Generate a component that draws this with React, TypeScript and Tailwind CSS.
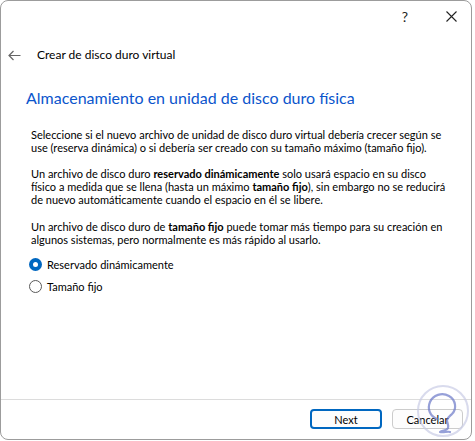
import React from 'react';

const font = { fontFamily: 'Lato, "Noto Sans", sans-serif' };

const Radio: React.FC<{ checked?: boolean; label: string }> = ({ checked, label }) => (
  <label className="flex items-center h-[22px] gap-[5px]">
    {checked ? (
      <span className="w-[13px] h-[13px] rounded-full bg-[#0067c0] flex items-center justify-center">
        <span className="w-[5px] h-[5px] rounded-full bg-white" />
      </span>
    ) : (
      <span className="w-[13px] h-[13px] rounded-full border border-[#5a5a5a] bg-white" />
    )}
    <span>{label}</span>
  </label>
);

const Watermark = () => (
  <svg className="absolute left-[415px] top-[383px] opacity-70" width="56" height="56" viewBox="0 0 56 56" fill="none">
    <circle cx="28" cy="28" r="25" stroke="#c9cce6" strokeWidth="2" />
    <path
      d="M22 36c-7-3-10-10-7-17 3-7 12-10 19-6 7 4 8 13 3 18-2 2-4 3-5 6 0 3 2 5 1 8-1 3-6 2-8 4 3 1 8-1 10 0"
      stroke="#6b78c8"
      strokeWidth="2.2"
      strokeLinecap="round"
      strokeLinejoin="round"
    />
  </svg>
);

export default function App() {
  return (
    <div className="w-[475px] h-[441px] bg-white relative overflow-hidden text-[11px] text-black" style={font}>
      <div className="w-[472px] h-[440px] border border-[#9c9c9c] rounded-lg flex flex-col bg-white">
        <div className="h-[30px] flex justify-end items-center gap-[6px]">
          <span className="w-[40px] text-center text-[14px] text-[#222]">?</span>
          <span className="w-[40px] flex justify-center">
            <svg width="11" height="11" viewBox="0 0 11 11" stroke="#222" strokeWidth="1.1">
              <path d="M0.5 0.5l10 10M10.5 0.5l-10 10" />
            </svg>
          </span>
        </div>
        <div className="flex items-center h-[24px] mt-[12px]">
          <svg className="ml-[7px]" width="13" height="11" viewBox="0 0 13 11" fill="none" stroke="#666" strokeWidth="1.2">
            <path d="M12.5 5.5H1M5.5 1L1 5.5 5.5 10" />
          </svg>
          <span className="ml-[16px] text-[12px]">Crear de disco duro virtual</span>
        </div>
        <h1 className="mt-[20px] ml-[25px] text-[16px] leading-[22px] text-[#0b55cc]">
          Almacenamiento en unidad de disco duro física
        </h1>
        <div className="mt-[19px] ml-[30px] leading-[13.1px] space-y-[13.1px] whitespace-nowrap">
          <p>
            Seleccione si el nuevo archivo de unidad de disco duro virtual debería crecer según se
            <br />
            use (reserva dinámica) o si debería ser creado con su tamaño máximo (tamaño fijo).
          </p>
          <p>
            Un archivo de disco duro <b>reservado dinámicamente</b> solo usará espacio en su disco
            <br />
            físico a medida que se llena (hasta un máximo <b>tamaño fijo</b>), sin embargo no se reducirá
            <br />
            de nuevo automáticamente cuando el espacio en él se libere.
          </p>
          <p>
            Un archivo de disco duro de <b>tamaño fijo</b> puede tomar más tiempo para su creación en
            <br />
            algunos sistemas, pero normalmente es más rápido al usarlo.
          </p>
        </div>
        <div className="mt-[8px] ml-[28px] flex flex-col">
          <Radio checked label="Reservado dinámicamente" />
          <Radio label="Tamaño fijo" />
        </div>
        <div className="flex-1" />
        <div className="h-[40px] border-t border-[#dcdcdc] flex justify-end items-start pt-[9px] pr-[8px] gap-[10px]">
          <button className="w-[72px] h-[20px] rounded-[4px] border-2 border-[#0067c0] bg-[#fdfdfd] text-[11px] leading-none">
            Next
          </button>
          <button className="w-[71px] h-[20px] rounded-[4px] border border-[#cccccc] bg-[#fdfdfd] text-[11px] leading-none">
            Cancelar
          </button>
        </div>
      </div>
      <Watermark />
    </div>
  );
}
